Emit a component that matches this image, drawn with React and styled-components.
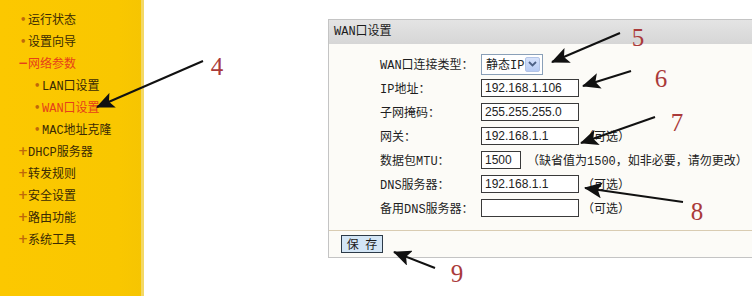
import styled, { createGlobalStyle } from "styled-components";

const GlobalStyle = createGlobalStyle`
  html, body {
    margin: 0;
    padding: 0;
    background: #ffffff;
    overflow: hidden;
  }
  body {
    font-family: "Liberation Mono", "Noto Sans CJK SC", monospace;
    font-size: 12px;
    color: #222222;
  }
`;

const menu = [
  { label: "运行状态", mark: "dot" },
  { label: "设置向导", mark: "dot" },
  { label: "网络参数", mark: "minus", active: true },
  { label: "LAN口设置", mark: "dot", sub: true },
  { label: "WAN口设置", mark: "dot", sub: true, active: true },
  { label: "MAC地址克隆", mark: "dot", sub: true },
  { label: "DHCP服务器", mark: "plus" },
  { label: "转发规则", mark: "plus" },
  { label: "安全设置", mark: "plus" },
  { label: "路由功能", mark: "plus" },
  { label: "系统工具", mark: "plus" },
];

const arrows = [
  { n: "4", from: [203, 61], to: [97, 107], at: [217, 75] },
  { n: "5", from: [620, 33], to: [552, 62], at: [638, 46] },
  { n: "6", from: [631, 71], to: [583, 86], at: [661, 87] },
  { n: "7", from: [655, 117], to: [581, 143], at: [677, 131] },
  { n: "8", from: [683, 202], to: [585, 188], at: [697, 220] },
  { n: "9", from: [435, 268], to: [394, 252], at: [457, 282] },
];

export default function App() {
  return (
    <Page>
      <GlobalStyle />
      <Sidebar>
        {menu.map((m) => (
          <MenuItem key={m.label} $sub={m.sub} $active={m.active}>
            <Mark $kind={m.mark}>{m.mark === "dot" ? "•" : m.mark === "minus" ? "−" : "+"}</Mark>
            <span>{m.label}</span>
          </MenuItem>
        ))}
      </Sidebar>

      <Main>
        <Panel>
          <PanelHeader>WAN口设置</PanelHeader>
          <PanelBody>
            <FormRow>
              <Label>WAN口连接类型：</Label>
              <SelectBox>
                <span>静态IP</span>
                <DropButton>
                  <svg width="9" height="6" viewBox="0 0 9 6">
                    <path d="M1 1 L4.5 4.5 L8 1" fill="none" stroke="#4d6185" strokeWidth="1.8" />
                  </svg>
                </DropButton>
              </SelectBox>
            </FormRow>
            <FormRow>
              <Label>IP地址：</Label>
              <Field><Input readOnly value="192.168.1.106" /></Field>
            </FormRow>
            <FormRow>
              <Label>子网掩码：</Label>
              <Field><Input readOnly value="255.255.255.0" /></Field>
            </FormRow>
            <FormRow>
              <Label>网关：</Label>
              <Field><Input readOnly value="192.168.1.1" /><Hint>（可选）</Hint></Field>
            </FormRow>
            <FormRow>
              <Label>数据包MTU：</Label>
              <Field><Input readOnly value="1500" $width={40} /><Note>（缺省值为1500，如非必要，请勿更改）</Note></Field>
            </FormRow>
            <FormRow>
              <Label>DNS服务器：</Label>
              <Field><Input readOnly value="192.168.1.1" /><Hint>（可选）</Hint></Field>
            </FormRow>
            <FormRow>
              <Label>备用DNS服务器：</Label>
              <Field><Input readOnly value="" /><Hint>（可选）</Hint></Field>
            </FormRow>
          </PanelBody>
          <PanelFooter>
            <SaveButton>保 存</SaveButton>
          </PanelFooter>
        </Panel>
      </Main>

      <Overlay width="752" height="296" viewBox="0 0 752 296">
        <defs>
          <marker id="head" markerUnits="userSpaceOnUse" markerWidth="18" markerHeight="16" refX="17" refY="8" orient="auto">
            <path d="M0 0 L18 8 L0 16 L4 8 Z" fill="#111" />
          </marker>
        </defs>
        {arrows.map((a) => (
          <g key={a.n}>
            <line x1={a.from[0]} y1={a.from[1]} x2={a.to[0]} y2={a.to[1]} stroke="#111" strokeWidth="2" markerEnd="url(#head)" />
            <StepNumber x={a.at[0]} y={a.at[1]} textAnchor="middle">{a.n}</StepNumber>
          </g>
        ))}
      </Overlay>
    </Page>
  );
}

const Page = styled.div`
  position: relative;
  display: flex;
  width: 752px;
  height: 296px;
  overflow: hidden;
`;

const Sidebar = styled.nav`
  width: 144px;
  flex-shrink: 0;
  background: linear-gradient(90deg, #fcc800 0%, #f9c700 85%, #f6c502 100%);
  border-right: 3px solid #f3d866;
  padding-top: 8px;
  box-sizing: border-box;
  display: flex;
  flex-direction: column;
`;

const MenuItem = styled.div`
  display: flex;
  align-items: center;
  height: 22px;
  padding-left: ${(p) => (p.$sub ? "32px" : "18px")};
  color: ${(p) => (p.$active ? "#e6401a" : "#3a2a04")};
  white-space: nowrap;
`;

const Mark = styled.span`
  width: ${(p) => (p.$kind === "dot" ? "8px" : "10px")};
  margin-left: ${(p) => (p.$kind === "dot" ? "2px" : "0")};
  font-family: "DejaVu Sans", sans-serif;
  font-weight: 700;
  font-size: ${(p) => (p.$kind === "dot" ? "10px" : "12px")};
  color: ${(p) => (p.$kind === "minus" ? "#e6401a" : "#c0680a")};
`;

const Main = styled.main`
  flex: 1;
  padding: 19px 0 0 184px;
`;

const Panel = styled.section`
  width: 460px;
  border: 1px solid #c4c4c4;
  border-right: none;
  background: #fcfbf7;
`;

const PanelHeader = styled.header`
  height: 24px;
  line-height: 24px;
  padding-left: 5px;
  background: linear-gradient(180deg, #e4e4e4 0%, #d6d6d6 100%);
  color: #1c1c1c;
`;

const PanelBody = styled.div`
  padding: 8px 0 10px 51px;
`;

const FormRow = styled.div`
  display: grid;
  grid-template-columns: 101px auto;
  align-items: center;
  height: 24px;
`;

const Label = styled.span`
  color: #1e1e1e;
  white-space: nowrap;
`;

const Field = styled.div`
  display: flex;
  align-items: center;
`;

const Input = styled.input`
  width: ${(p) => p.$width || 98}px;
  height: 18px;
  box-sizing: border-box;
  border: 1px solid #3a3a3a;
  background: #ffffff;
  padding: 0 3px;
  margin: 0;
  font-family: "Liberation Sans", Arial, sans-serif;
  font-size: 12px;
  color: #222;
  outline: none;
`;

const Hint = styled.span`
  margin-left: 3px;
  white-space: nowrap;
`;

const Note = styled.span`
  margin-left: 6px;
  white-space: nowrap;
`;

const SelectBox = styled.div`
  display: flex;
  align-items: center;
  justify-content: space-between;
  width: 62px;
  height: 21px;
  box-sizing: border-box;
  border: 1px solid #8aa0b8;
  background: #ffffff;
  padding: 0 2px 0 4px;
`;

const DropButton = styled.span`
  display: flex;
  align-items: center;
  justify-content: center;
  width: 15px;
  height: 15px;
  border-radius: 2px;
  background: linear-gradient(180deg, #d6e2fb 0%, #b7cbf3 100%);
  border: 1px solid #b3c4e6;
  box-sizing: border-box;
`;

const PanelFooter = styled.footer`
  display: flex;
  align-items: center;
  height: 26px;
  padding-left: 12px;
  border-top: 1px solid #d9ccb2;
`;

const SaveButton = styled.button`
  width: 42px;
  height: 18px;
  padding: 0;
  border: 1px solid #2c3a48;
  background: #d3e5f5;
  font-family: "Noto Sans CJK SC", sans-serif;
  font-size: 12px;
  line-height: 16px;
  white-space: nowrap;
  word-spacing: 4px;
  color: #1c1c1c;
`;

const Overlay = styled.svg`
  position: absolute;
  left: 0;
  top: 0;
  pointer-events: none;
`;

const StepNumber = styled.text`
  font-family: "Liberation Serif", "Times New Roman", serif;
  font-size: 25px;
  fill: #aa3a3a;
`;
